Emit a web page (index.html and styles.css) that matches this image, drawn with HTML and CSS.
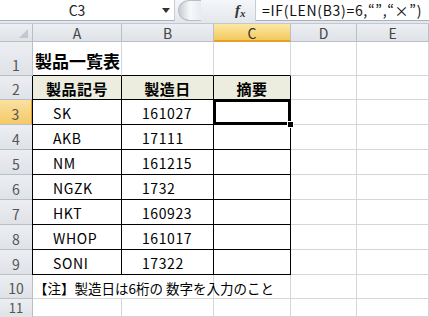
FILE: index.html
```html
<!DOCTYPE html>
<html lang="ja">
<head>
    <meta charset="UTF-8">
    <title>製品一覧表</title>
    <link rel="stylesheet" href="styles.css">
</head>
<body>
    <div class="formula-bar">
        <div class="name-box">
            <span class="name">C3</span>
            <svg class="dropdown" width="8" height="5" viewBox="0 0 8 5"><path d="M0 0h8L4 5z" fill="#333"/></svg>
        </div>
        <div class="splitter"><span class="knob"></span></div>
        <div class="fx"><i>f</i><i class="x">x</i></div>
        <div class="formula">=IF(LEN(B3)=6,“”,“×”)</div>
    </div>

    <div class="sheet">
        <!-- 列見出し -->
        <div class="hd corner"><span class="tri"></span></div>
        <div class="hd col">A</div>
        <div class="hd col">B</div>
        <div class="hd col active-col">C</div>
        <div class="hd col">D</div>
        <div class="hd col last">E</div>

        <!-- 1 -->
        <div class="hd row">1</div>
        <div class="cell title top-edge">製品一覧表</div>
        <div class="cell top-edge"></div>
        <div class="cell top-edge"></div>
        <div class="cell"></div>
        <div class="cell"></div>

        <!-- 2 -->
        <div class="hd row">2</div>
        <div class="cell tb th first">製品記号</div>
        <div class="cell tb th">製造日</div>
        <div class="cell tb th">摘要</div>
        <div class="cell"></div>
        <div class="cell"></div>

        <!-- 3 -->
        <div class="hd row active-row">3</div>
        <div class="cell tb first">SK</div>
        <div class="cell tb">161027</div>
        <div class="cell tb selected"><span class="handle"></span></div>
        <div class="cell"></div>
        <div class="cell"></div>

        <!-- 4 -->
        <div class="hd row">4</div>
        <div class="cell tb first">AKB</div>
        <div class="cell tb">17111</div>
        <div class="cell tb"></div>
        <div class="cell"></div>
        <div class="cell"></div>

        <!-- 5 -->
        <div class="hd row">5</div>
        <div class="cell tb first">NM</div>
        <div class="cell tb">161215</div>
        <div class="cell tb"></div>
        <div class="cell"></div>
        <div class="cell"></div>

        <!-- 6 -->
        <div class="hd row">6</div>
        <div class="cell tb first">NGZK</div>
        <div class="cell tb">1732</div>
        <div class="cell tb"></div>
        <div class="cell"></div>
        <div class="cell"></div>

        <!-- 7 -->
        <div class="hd row">7</div>
        <div class="cell tb first">HKT</div>
        <div class="cell tb">160923</div>
        <div class="cell tb"></div>
        <div class="cell"></div>
        <div class="cell"></div>

        <!-- 8 -->
        <div class="hd row">8</div>
        <div class="cell tb first">WHOP</div>
        <div class="cell tb">161017</div>
        <div class="cell tb"></div>
        <div class="cell"></div>
        <div class="cell"></div>

        <!-- 9 -->
        <div class="hd row">9</div>
        <div class="cell tb first">SONI</div>
        <div class="cell tb">17322</div>
        <div class="cell tb"></div>
        <div class="cell"></div>
        <div class="cell"></div>

        <!-- 10 -->
        <div class="hd row">10</div>
        <div class="cell note">【注】製造日は6桁の 数字を入力のこと</div>
        <div class="cell"></div>
        <div class="cell"></div>
        <div class="cell"></div>
        <div class="cell"></div>

        <!-- 11 -->
        <div class="hd row last-row">11</div>
        <div class="cell"></div>
        <div class="cell"></div>
        <div class="cell"></div>
        <div class="cell"></div>
        <div class="cell"></div>
    </div>
</body>
</html>
```

FILE: styles.css
```css
html, body {
    margin: 0;
    padding: 0;
}

body {
    width: 429px;
    background: #ffffff;
    font-family: "Noto Sans CJK JP", "Noto Sans", sans-serif;
    color: #000;
}

/* 数式バー */
.formula-bar {
    display: flex;
    height: 24px;
    box-sizing: border-box;
    background: linear-gradient(#f4f6f9, #e3e7ec);
    border-bottom: 1px solid #c2c8d0;
}

.name-box {
    width: 175px;
    height: 21px;
    box-sizing: border-box;
    background: #fff;
    border-bottom: 1px solid #a9b1bc;
    border-right: 1px solid #c8cdd4;
    display: flex;
    align-items: center;
}

.name {
    flex: 1;
    text-align: center;
    font-size: 14px;
    color: #222;
    padding-right: 8px;
}

.dropdown {
    margin-right: 4px;
}

.splitter {
    width: 60px;
    height: 21px;
    display: flex;
    align-items: center;
}

.knob {
    width: 22px;
    height: 19px;
    margin-left: 3px;
    border-radius: 50% 0 0 50%;
    background: linear-gradient(90deg, #c8ccd2, #f7f8fa 50%, #e9ecf0);
    border: 1px solid #b9bec6;
    border-right: none;
}

.fx {
    width: 20px;
    height: 21px;
    display: flex;
    align-items: center;
    font-family: "Liberation Serif", serif;
    font-weight: bold;
    font-size: 15px;
    color: #333;
    border-right: 1px solid #c8cdd4;
}

.fx .x {
    font-size: 11px;
    margin-top: 4px;
}

.formula {
    flex: 1;
    height: 21px;
    box-sizing: border-box;
    background: #fff;
    border-bottom: 1px solid #a9b1bc;
    font-size: 14px;
    line-height: 20px;
    padding-left: 6px;
    letter-spacing: 0.7px;
    white-space: nowrap;
    color: #111;
}

/* シート */
.sheet {
    display: grid;
    grid-template-columns: 33px 89px 92px 77px 66px 1fr;
    grid-template-rows: 18px 34px 24px repeat(7, 25px) 24px 18px;
}

.hd {
    box-sizing: border-box;
    background: linear-gradient(#eceef2, #dfe2e7);
    border-right: 1px solid #b9bfc8;
    border-bottom: 1px solid #b9bfc8;
    color: #444;
    font-size: 14px;
    line-height: 16px;
    display: flex;
    align-items: center;
    justify-content: center;
}

.hd.corner {
    position: relative;
}

.tri {
    position: absolute;
    right: 4px;
    bottom: 3px;
    border-left: 9px solid transparent;
    border-bottom: 9px solid #c3c8cf;
}

.hd.col {
    padding-top: 1px;
}

.hd.row {
    align-items: flex-end;
    padding-bottom: 2px;
    color: #555;
}

.hd.last-row {
    align-items: center;
    font-size: 13px;
    line-height: 14px;
    padding: 0;
    border-bottom: none;
}

.active-col {
    background: linear-gradient(#fbe8a6, #f4c95e);
    border-bottom: 2px solid #e3a02a;
    color: #333;
}

.active-row {
    background: linear-gradient(#fbe0a0, #f5c968);
    border-right: 2px solid #e3a02a;
    color: #333;
}

.cell {
    box-sizing: border-box;
    border-right: 1px solid #d6d6d6;
    border-bottom: 1px solid #d6d6d6;
    font-size: 14px;
    letter-spacing: 0.6px;
    display: flex;
    align-items: center;
    padding-left: 20px;
    padding-top: 2px;
    white-space: nowrap;
    position: relative;
}

.title {
    font-size: 17px;
    font-weight: bold;
    letter-spacing: 0;
    padding-left: 2px;
    align-items: flex-end;
    padding-bottom: 2px;
    overflow: visible;
}

.top-edge {
    border-bottom-color: #000;
}

.tb {
    border-right-color: #000;
    border-bottom-color: #000;
}

.tb.first {
    box-shadow: -1px 0 0 #000;
}

.th {
    background: #ecedde;
    font-weight: bold;
    font-size: 15px;
    letter-spacing: 0.5px;
    justify-content: center;
    padding-left: 0;
}

.selected {
    box-shadow: inset 0 0 0 2px #000;
}

.handle {
    position: absolute;
    right: -4px;
    bottom: -4px;
    width: 5px;
    height: 5px;
    background: #000;
    border: 1px solid #fff;
    z-index: 1;
}

.note {
    padding-left: 1px;
    font-size: 13.5px;
    letter-spacing: 0;
    overflow: visible;
    z-index: 1;
    border-right: none;
}
```
